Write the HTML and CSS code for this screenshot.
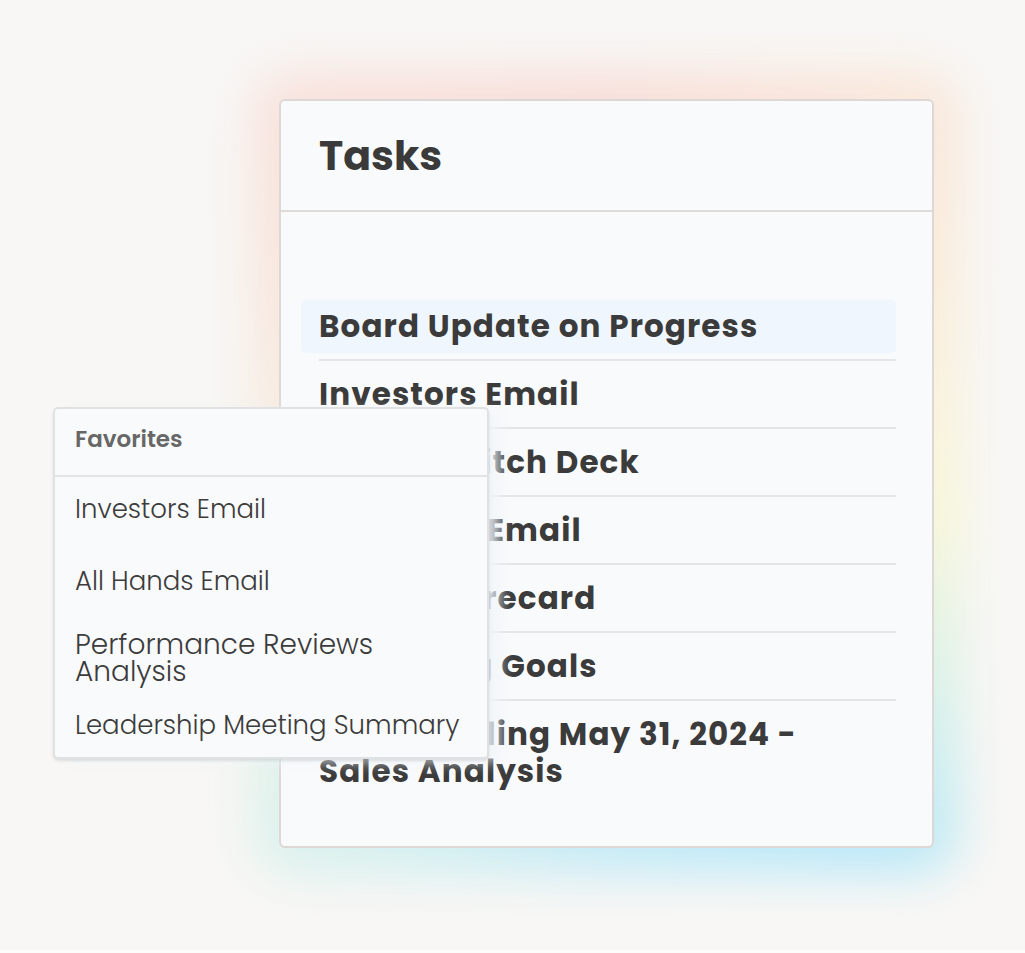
FILE: index.html
```html
<!DOCTYPE html>
<html lang="en">
<head>
<meta charset="utf-8">
<title>Tasks</title>
<link rel="stylesheet" href="styles.css">
</head>
<body>
<div class="scene">
  <div class="card">
    <div class="card-header">
      <h1 class="card-title">Tasks</h1>
    </div>
    <div class="card-body">
      <ul class="task-list">
        <li class="task is-active">Board Update on Progress</li>
        <li class="divider"></li>
        <li class="task">Investors Email</li>
        <li class="divider"></li>
        <li class="task">Series A Pitch Deck</li>
        <li class="divider"></li>
        <li class="task">All Hands Email</li>
        <li class="divider"></li>
        <li class="task">Team Scorecard</li>
        <li class="divider"></li>
        <li class="task">Marketing Goals</li>
        <li class="divider"></li>
        <li class="task">Month Ending May 31, 2024 - Sales Analysis</li>
      </ul>
    </div>
  </div>

  <div class="favorites">
    <div class="fav-header">Favorites</div>
    <ul class="fav-list">
      <li class="fav-item fav-item--first">Investors Email</li>
      <li class="fav-item">All Hands Email</li>
      <li class="fav-item fav-item--lg">Performance Reviews Analysis</li>
      <li class="fav-item fav-item--last">Leadership Meeting Summary</li>
    </ul>
  </div>
</div>
</body>
</html>
```

FILE: styles.css
```css
html {
  background: #fcfcfb;
}

body {
  margin: 0;
  font-family: "Poppins", "Open Sans", "Liberation Sans", sans-serif;
  color: #3a3a3a;
}

.scene {
  position: relative;
  isolation: isolate;
  height: 950px;
  box-sizing: border-box;
  padding: 99px 0 0 279px;
  background: #f8f7f5;
  overflow: hidden;
}

.card {
  position: relative;
  width: 655px;
  box-sizing: border-box;
  border: 2px solid #ddd8d5;
  border-radius: 6px;
  background: #f9fafb;
}

.card::before {
  content: "";
  position: absolute;
  inset: -28px;
  z-index: -1;
  border-radius: 40px;
  background: conic-gradient(from 0deg at 50% 50%,
    #f8dcd7 0deg,
    #f9e6d8 40deg,
    #f9f1da 75deg,
    #f7f6d6 98deg,
    #d9f1e6 122deg,
    #b9e8f8 142deg,
    #c3eaf6 180deg,
    #d6f0ee 215deg,
    #e6f2e6 240deg,
    #f7ebdf 280deg,
    #f8e0da 320deg,
    #f8dcd7 360deg);
  filter: blur(24px);
}

.card-header {
  padding: 30px 38px 29px;
  border-bottom: 2px solid #dfdbd8;
}

.card-title {
  margin: 0;
  font-size: 41px;
  line-height: 50px;
  font-weight: 700;
  color: #3a3a3a;
}

.card-body {
  padding: 81px 36px 42px 20px;
}

.task-list {
  list-style: none;
  margin: 0;
  padding: 0;
}

.task {
  margin: 7px 0 6px;
  padding: 8px 40px 8px 18px;
  border-radius: 5px;
  font-size: 31px;
  line-height: 37px;
  font-weight: 700;
  letter-spacing: 1.1px;
  color: #3b3b3b;
}

.task.is-active {
  background: #eff6fe;
}

.divider {
  height: 2px;
  margin-left: 18px;
  background: #e4e5e7;
}

.favorites {
  position: absolute;
  left: 53px;
  top: 407px;
  width: 436px;
  box-sizing: border-box;
  border: 2px solid #dfe1e3;
  border-radius: 5px;
  background: #f9fafb;
  box-shadow: 0 2px 3px rgba(0, 0, 0, 0.1), 12px 4px 14px -2px rgba(240, 245, 250, 0.9);
}

.fav-header {
  padding: 16px 20px 22px;
  border-bottom: 2px solid #e2e4e6;
  font-size: 23px;
  line-height: 28px;
  font-weight: 600;
  color: #676767;
}

.fav-list {
  list-style: none;
  margin: 0;
  padding: 0;
}

.fav-item {
  padding: 18px 20px;
  font-size: 26px;
  line-height: 27px;
  font-weight: 300;
  color: #3c3c3c;
}

.fav-item--first {
  padding-top: 19px;
  padding-bottom: 27px;
}

.fav-item--lg {
  font-size: 28px;
}

.fav-item--last {
  padding-top: 9px;
}
```
